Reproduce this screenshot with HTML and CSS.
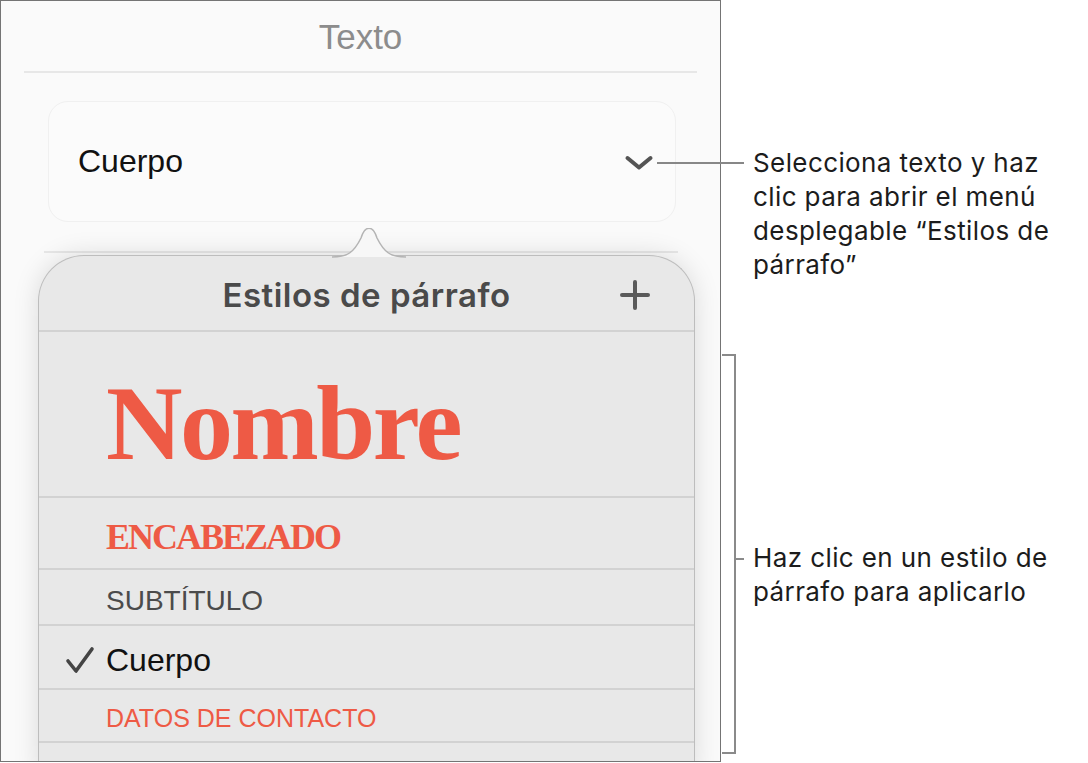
FILE: index.html
```html
<!DOCTYPE html>
<html lang="es">

<head>
    <meta charset="UTF-8">
    <meta name="viewport" content="width=device-width, initial-scale=1.0">
    <title>Estilos de párrafo</title>
    <link rel="stylesheet" href="styles.css">
</head>

<body>
    <div class="page">
        <!-- Format inspector, Text tab -->
        <section class="inspector">
            <h2 class="inspector-title">Texto</h2>
            <div class="rule"></div>

            <div class="style-picker">
                <span class="style-picker-value">Cuerpo</span>
                <svg class="chevron" width="30" height="16" viewBox="0 0 30 16">
                    <path d="M3.5 3 L15 12.5 L26.5 3" fill="none" stroke="#545454" stroke-width="4" stroke-linecap="round" stroke-linejoin="round" />
                </svg>
            </div>

            <div class="rule rule-lower"></div>

            <!-- Paragraph styles popover -->
            <div class="popover">
                <svg class="popover-arrow" width="74" height="30" viewBox="0 0 74 30">
                    <path d="M0 29 C16 29 22 24 29 10 C33 -3 41 -3 45 10 C52 24 58 29 74 29 Z" fill="#f7f7f7" />
                    <path d="M0 29 C16 29 22 24 29 10 C33 -3 41 -3 45 10 C52 24 58 29 74 29" fill="none" stroke="#b4b4b4" stroke-width="1.5" />
                </svg>
                <div class="popover-header">
                    <span class="popover-title">Estilos de párrafo</span>
                    <svg class="add" width="30" height="30" viewBox="0 0 30 30">
                        <path d="M15 2 V28 M2 15 H28" stroke="#5a5a5a" stroke-width="4" stroke-linecap="round" />
                    </svg>
                </div>
                <ul class="style-list">
                    <li class="style-item item-name"><span class="mark"></span>Nombre</li>
                    <li class="style-item item-heading"><span class="mark"></span>ENCABEZADO</li>
                    <li class="style-item item-subtitle"><span class="mark"></span>SUBTÍTULO</li>
                    <li class="style-item item-body">
                        <span class="mark">
                            <svg width="30" height="28" viewBox="0 0 30 28">
                                <path d="M3 15 L11 25 L27 3" fill="none" stroke="#444" stroke-width="3.6" stroke-linecap="round" stroke-linejoin="round" />
                            </svg>
                        </span>Cuerpo
                    </li>
                    <li class="style-item item-contact"><span class="mark"></span>DATOS DE CONTACTO</li>
                    <li class="style-item item-empty"></li>
                </ul>
            </div>
        </section>

        <!-- Callouts -->
        <aside class="notes">
            <p class="note note-select">Selecciona texto y haz<br>clic para abrir el menú<br>desplegable “Estilos de<br>párrafo”</p>
            <div class="note-group">
                <div class="bracket"></div>
                <p class="note note-apply">Haz clic en un estilo de<br>párrafo para aplicarlo</p>
            </div>
        </aside>
    </div>
</body>

</html>
```

FILE: styles.css
```css
body {
    margin: 0;
    background-color: #fff;
    font-family: 'Liberation Sans', Arial, sans-serif;
}

.page {
    display: flex;
    align-items: flex-start;
}

/* Inspector panel */

.inspector {
    flex-shrink: 0;
    width: 719px;
    height: 760px;
    border: 1px solid #747474;
    background-color: #fafafa;
    overflow: hidden;
}

.inspector-title {
    margin: 0;
    height: 70px;
    line-height: 72px;
    text-align: center;
    font-size: 35px;
    font-weight: normal;
    color: #8c8c8c;
}

.rule {
    height: 2px;
    margin: 0 23px;
    background-color: #e7e7e7;
}

.style-picker {
    display: flex;
    align-items: center;
    justify-content: space-between;
    height: 121px;
    margin: 28px 44px 0 47px;
    padding: 0 21px 0 29px;
    box-sizing: border-box;
    border: 1px solid #f0f0f0;
    border-radius: 20px;
    background-color: #fbfbfb;
}

.style-picker-value {
    font-size: 32px;
    color: #111;
}

.chevron {
    margin-top: 2px;
}

.rule-lower {
    margin: 29px 42px 0 43px;
}

/* Popover */

.popover {
    position: relative;
    width: 657px;
    height: 520px;
    margin: 2px 0 0 37px;
    box-sizing: border-box;
    border: 1px solid #bdbdbd;
    border-bottom: none;
    border-radius: 46px 46px 0 0;
    background-color: #e8e8e8;
    box-shadow: 0 0 26px rgba(0, 0, 0, 0.13);
}

.popover-arrow {
    position: absolute;
    top: -28px;
    left: 293px;
}

.popover-header {
    position: relative;
    display: flex;
    align-items: center;
    justify-content: center;
    height: 76px;
    padding-top: 3px;
    box-sizing: border-box;
    border-bottom: 2px solid #d2d2d2;
}

.popover-title {
    font-family: 'Inter', sans-serif;
    font-size: 33px;
    font-weight: 600;
    letter-spacing: 0.5px;
    color: #4a4a4a;
}

.add {
    position: absolute;
    top: 24px;
    right: 44px;
}

.style-list {
    list-style: none;
    margin: 0;
    padding: 0;
}

.style-item {
    display: flex;
    align-items: flex-start;
    padding-left: 26px;
    box-sizing: border-box;
    line-height: 1;
    border-bottom: 2px solid #d2d2d2;
    white-space: nowrap;
}

.mark {
    width: 41px;
    flex-shrink: 0;
}

.item-name {
    height: 166px;
    padding-top: 39px;
    font-family: 'Liberation Serif', 'Times New Roman', serif;
    font-size: 106px;
    font-weight: bold;
    letter-spacing: -2.5px;
    color: #ee5a45;
}

.item-heading {
    height: 72px;
    padding-top: 21px;
    font-family: 'Liberation Serif', 'Times New Roman', serif;
    font-size: 36px;
    font-weight: bold;
    letter-spacing: -2px;
    color: #ee5a45;
}

.item-subtitle {
    height: 56px;
    padding-top: 17px;
    font-size: 28px;
    color: #4b4b4b;
}

.item-body {
    height: 64px;
    padding-top: 18px;
    font-size: 32px;
    color: #111;
}

.item-body .mark svg {
    margin-top: 2px;
}

.item-contact {
    height: 53px;
    padding-top: 16px;
    font-size: 25px;
    color: #ee5a45;
}

.item-empty {
    height: 60px;
}

/* Callouts */

.notes {
    display: flex;
    flex-direction: column;
    padding-top: 146px;
    font-family: 'Inter', sans-serif;
    font-size: 26px;
    letter-spacing: 0.4px;
    line-height: 34px;
    color: #1c1c1c;
}

.note {
    margin: 0;
    white-space: nowrap;
}

.note-select {
    position: relative;
    margin-left: 32px;
}

/* leader line back to the chevron */
.note-select::before {
    content: '';
    position: absolute;
    top: 16px;
    left: -96px;
    width: 87px;
    height: 2px;
    background-color: #878787;
}

.note-group {
    display: flex;
    align-items: flex-start;
    margin-top: 72px;
}

.bracket {
    position: relative;
    width: 12px;
    height: 396px;
    margin-left: 1px;
    border: 2px solid #8a8a8a;
    border-left: none;
}

.bracket::after {
    content: '';
    position: absolute;
    top: 202px;
    left: 100%;
    width: 10px;
    height: 2px;
    background-color: #8a8a8a;
}

.note-apply {
    margin-left: 17px;
    margin-top: 187px;
}
```
